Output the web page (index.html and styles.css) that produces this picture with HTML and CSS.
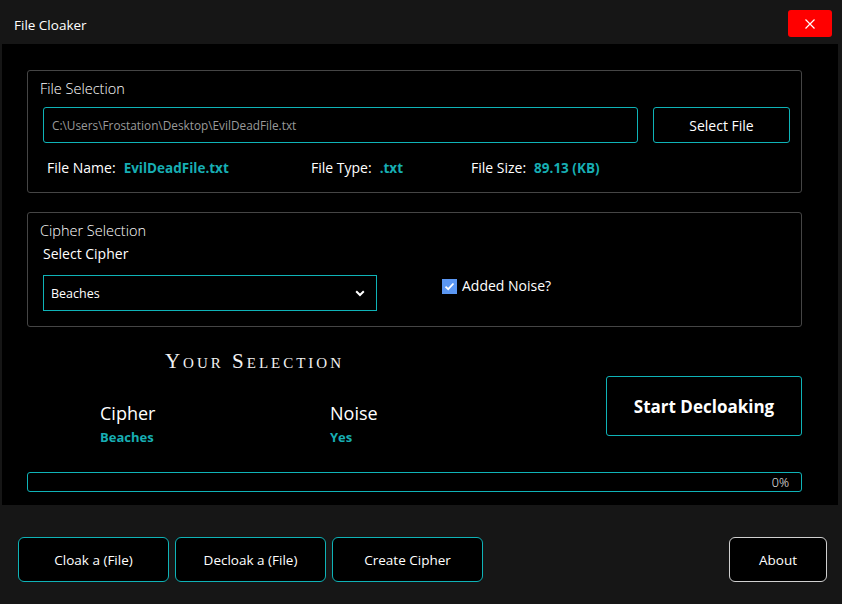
FILE: index.html
```html
<!DOCTYPE html>
<html>
<head>
<meta charset="utf-8">
<link rel="stylesheet" href="styles.css">
</head>
<body>
<div class="window">
  <div class="titlebar">
    <div class="app-title">File Cloaker</div>
    <div class="close-btn">
      <svg width="12" height="12" viewBox="0 0 12 12"><path d="M1.5 1.5 L10.5 10.5 M10.5 1.5 L1.5 10.5" stroke="#fff" stroke-width="1.2" fill="none"/></svg>
    </div>
  </div>
  <div class="panel">
    <div class="group group-file">
      <div class="group-title">File Selection</div>
      <div class="file-row">
        <div class="path-input">C:\Users\Frostation\Desktop\EvilDeadFile.txt</div>
        <div class="btn select-btn">Select File</div>
      </div>
      <div class="info-row">
        <div class="info info-name"><span class="lbl">File Name:</span><span class="val">EvilDeadFile.txt</span></div>
        <div class="info info-type"><span class="lbl">File Type:</span><span class="val">.txt</span></div>
        <div class="info info-size"><span class="lbl">File Size:</span><span class="val">89.13 (KB)</span></div>
      </div>
    </div>
    <div class="group group-cipher">
      <div class="group-title">Cipher Selection</div>
      <div class="sub-label">Select Cipher</div>
      <div class="cipher-row">
        <div class="select">
          <span>Beaches</span>
          <svg class="chev" width="10" height="7" viewBox="0 0 10 7"><path d="M1.2 1.3 L5 5 L8.8 1.3" stroke="#fff" stroke-width="2" fill="none"/></svg>
        </div>
        <div class="check">
          <span class="box"><svg width="11" height="9" viewBox="0 0 11 9"><path d="M1.5 4.6 L4.2 7.2 L9.5 1.5" stroke="#fff" stroke-width="1.8" fill="none"/></svg></span>
          <span class="check-label">Added Noise?</span>
        </div>
      </div>
    </div>
    <div class="summary">
      <div class="summary-left">
        <div class="your-sel">Your Selection</div>
        <div class="sel-cols">
          <div class="sel-col">
            <div class="sel-head">Cipher</div>
            <div class="sel-val">Beaches</div>
          </div>
          <div class="sel-col">
            <div class="sel-head">Noise</div>
            <div class="sel-val">Yes</div>
          </div>
        </div>
      </div>
      <div class="btn start-btn">Start Decloaking</div>
    </div>
    <div class="progress"><span class="pct">0%</span></div>
  </div>
  <div class="bottombar">
    <div class="nav">
      <div class="btn nav-btn">Cloak a (File)</div>
      <div class="btn nav-btn">Decloak a (File)</div>
      <div class="btn nav-btn">Create Cipher</div>
    </div>
    <div class="btn about-btn">About</div>
  </div>
</div>
</body>
</html>
```

FILE: styles.css
```css
* { box-sizing: border-box; }
html, body { margin: 0; padding: 0; }
body {
  background: #161616;
  font-family: "Open Sans", "Noto Sans", sans-serif;
  color: #fff;
  width: 842px;
  height: 604px;
  overflow: hidden;
}
.window { width: 842px; height: 604px; display: flex; flex-direction: column; }
.titlebar {
  height: 44px;
  display: flex;
  justify-content: space-between;
  align-items: flex-start;
  padding: 10px 10px 0 14px;
}
.app-title { font-size: 13.5px; line-height: 30px; color: #fff; }
.close-btn {
  width: 44px; height: 27px;
  background: #ff0000;
  border-radius: 3px;
  display: flex; align-items: center; justify-content: center;
}
.panel {
  background: #000;
  margin-left: 2px;
  width: 836px;
  height: 461px;
  padding: 26px 36px 0 25px;
  display: flex;
  flex-direction: column;
}
.group {
  border: 1px solid #454545;
  border-radius: 3px;
  padding: 0 11px 0 15px;
}
.group-title {
  font-size: 14.5px;
  font-weight: 300;
  line-height: 20px;
  margin: 8px 0 0 -3px;
  color: #fff;
}
.group-file { height: 123px; }
.file-row { display: flex; gap: 15px; margin-top: 8px; }
.path-input {
  width: 595px; height: 36px;
  border: 1px solid #0fb3b7;
  border-radius: 3px;
  font-size: 11.8px;
  color: #9a9a9a;
  padding-left: 8px;
  line-height: 34px;
}
.btn {
  display: flex; align-items: center; justify-content: center;
  background: #000;
  color: #fff;
  border: 1px solid #0fb3b7;
}
.select-btn { width: 137px; height: 36px; border-radius: 3px; font-size: 14px; }
.info-row { display: flex; margin-top: 15px; line-height: 20px; font-size: 14px; padding-left: 4px; }
.info { display: flex; gap: 8px; }
.info-name { width: 264px; }
.info-type { width: 160px; }
.val { color: #17aeb3; font-weight: 700; font-size: 13.5px; }
.group-cipher { height: 115px; margin-top: 19px; }
.sub-label { font-size: 14px; line-height: 20px; margin-top: 3px; }
.cipher-row { display: flex; margin-top: 11px; align-items: flex-start; }
.select {
  width: 334px; height: 36px;
  border: 1px solid #0fb3b7;
  display: flex; align-items: center; justify-content: space-between;
  padding: 0 11px 0 7px;
  font-size: 12.5px;
}
.chev { margin-top: 1px; }
.check { display: flex; align-items: center; gap: 5px; margin: 2px 0 0 65px; }
.box {
  width: 15px; height: 15px;
  background: #5b97f3;
  display: flex; align-items: center; justify-content: center;
}
.check-label { font-size: 14px; line-height: 18px; }
.summary { height: 126px; margin-top: 19px; display: flex; justify-content: space-between; }
.summary-left { width: 452px; }
.your-sel {
  font-family: "Liberation Serif", "DejaVu Serif", serif;
  font-variant: small-caps;
  font-size: 21px;
  letter-spacing: 3px;
  padding-left: 3px;
  line-height: 30px;
  text-align: center;
  color: #f2f2f2;
}
.sel-cols { display: flex; margin-top: 25px; padding-left: 73px; }
.sel-col { width: 230px; flex-shrink: 0; }
.sel-col + .sel-col { width: auto; flex-shrink: 1; }
.sel-head { font-size: 18px; line-height: 24px; }
.sel-val { font-size: 13px; line-height: 18px; margin-top: 3px; color: #17aeb3; font-weight: 700; }
.start-btn {
  width: 196px; height: 60px;
  margin-top: 30px;
  border-radius: 3px;
  font-size: 17px;
  font-weight: 700;
}
.progress {
  height: 20px;
  border: 1px solid #0fb3b7;
  border-radius: 3px;
  display: flex; justify-content: flex-end; align-items: center;
  padding-right: 12px;
}
.pct { font-size: 12.5px; font-weight: 300; }
.bottombar {
  flex: 1;
  display: flex;
  justify-content: space-between;
  align-items: flex-start;
  padding: 32px 15px 0 18px;
}
.nav { display: flex; gap: 6px; }
.nav-btn { width: 151px; height: 45px; border-radius: 6px; font-size: 13.5px; }
.about-btn { width: 98px; height: 45px; border-radius: 6px; font-size: 13.5px; border-color: #d0d0d0; }
```
